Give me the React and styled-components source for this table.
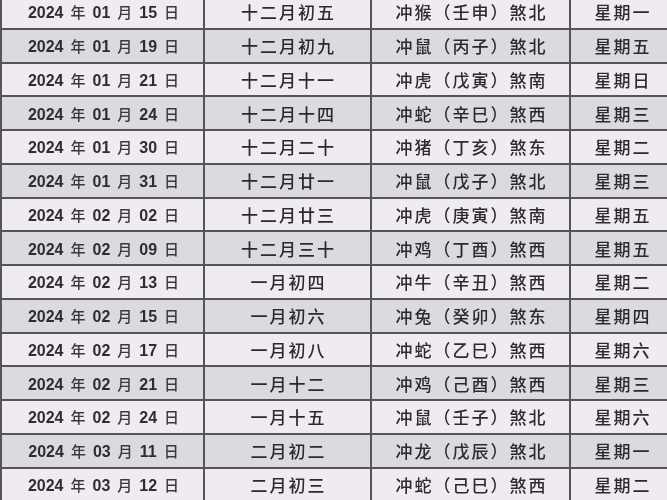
import styled, { createGlobalStyle } from "styled-components";

const GlobalStyle = createGlobalStyle`
  html, body {
    margin: 0;
    padding: 0;
    overflow: hidden;
    background: #efeaf0;
  }
`;

const rows = [
  ["01", "15", "十二月初五", "冲猴（壬申）煞北", "星期一"],
  ["01", "19", "十二月初九", "冲鼠（丙子）煞北", "星期五"],
  ["01", "21", "十二月十一", "冲虎（戊寅）煞南", "星期日"],
  ["01", "24", "十二月十四", "冲蛇（辛巳）煞西", "星期三"],
  ["01", "30", "十二月二十", "冲猪（丁亥）煞东", "星期二"],
  ["01", "31", "十二月廿一", "冲鼠（戊子）煞北", "星期三"],
  ["02", "02", "十二月廿三", "冲虎（庚寅）煞南", "星期五"],
  ["02", "09", "十二月三十", "冲鸡（丁酉）煞西", "星期五"],
  ["02", "13", "一月初四", "冲牛（辛丑）煞西", "星期二"],
  ["02", "15", "一月初六", "冲兔（癸卯）煞东", "星期四"],
  ["02", "17", "一月初八", "冲蛇（乙巳）煞西", "星期六"],
  ["02", "21", "一月十二", "冲鸡（己酉）煞西", "星期三"],
  ["02", "24", "一月十五", "冲鼠（壬子）煞北", "星期六"],
  ["03", "11", "二月初二", "冲龙（戊辰）煞北", "星期一"],
  ["03", "12", "二月初三", "冲蛇（己巳）煞西", "星期二"],
];

const Table = styled.div`
  width: 675px;
  margin-top: -4px;
  border-left: 2px solid #55545c;
  display: flex;
  flex-direction: column;
`;

const Row = styled.div`
  display: grid;
  grid-template-columns: 203px 167px 199px 104px;
  height: 33.75px;
  box-sizing: border-box;
  border-bottom: 2px solid #55545c;
  background: ${(p) => (p.$shade ? "#dbdae0" : "#f0ebf1")};
`;

const Cell = styled.div`
  display: flex;
  align-items: center;
  justify-content: center;
  border-right: 2px solid #55545c;
  color: #2b2a2e;
  font-family: "Noto Sans CJK SC", sans-serif;
  font-size: 17px;
  font-weight: 500;
  letter-spacing: 2px;
  text-indent: 2px;
  white-space: nowrap;
  filter: blur(0.3px);
`;

const DateCell = styled(Cell)`
  letter-spacing: 0;
  text-indent: 0;
  padding-left: 2px;
`;

const DateText = styled.div`
  display: inline-flex;
  align-items: baseline;
  gap: 7px;
`;

const Num = styled.span`
  font-family: "Liberation Sans", Arial, sans-serif;
  font-size: 16px;
  font-weight: 700;
  color: #2e2d31;
`;

const Han = styled.span`
  font-family: "Noto Sans CJK SC", sans-serif;
  font-size: 15px;
  font-weight: 500;
  color: #3a393e;
`;

export default function App() {
  return (
    <>
      <GlobalStyle />
      <Table>
        {rows.map(([m, d, lunar, clash, week], i) => (
          <Row key={i} $shade={i % 2 === 1}>
            <DateCell>
              <DateText>
                <Num>2024</Num>
                <Han>年</Han>
                <Num>{m}</Num>
                <Han>月</Han>
                <Num>{d}</Num>
                <Han>日</Han>
              </DateText>
            </DateCell>
            <Cell>{lunar}</Cell>
            <Cell>{clash}</Cell>
            <Cell>{week}</Cell>
          </Row>
        ))}
      </Table>
    </>
  );
}
